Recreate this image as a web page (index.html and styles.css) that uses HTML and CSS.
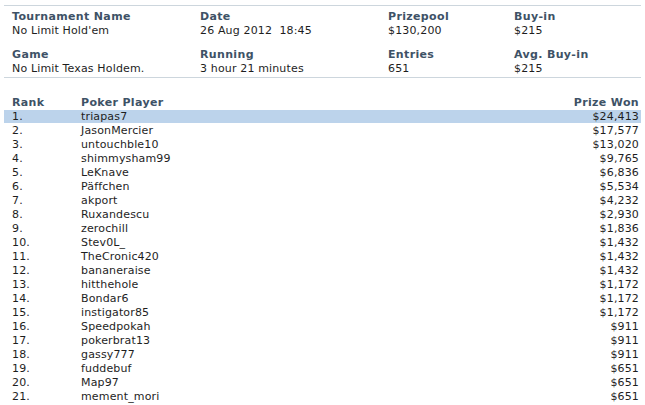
FILE: index.html
```html
<!DOCTYPE html>
<html>
<head>
<meta charset="utf-8">
<link rel="stylesheet" href="styles.css">
</head>
<body>
<div class="page">
  <div class="info">
    <div class="item"><div class="lbl">Tournament Name</div><div class="val">No Limit Hold'em</div></div>
    <div class="item"><div class="lbl">Date</div><div class="val">26 Aug 2012&nbsp;&nbsp;18:45</div></div>
    <div class="item"><div class="lbl">Prizepool</div><div class="val">$130,200</div></div>
    <div class="item"><div class="lbl">Buy-in</div><div class="val">$215</div></div>
    <div class="item"><div class="lbl">Game</div><div class="val">No Limit Texas Holdem.</div></div>
    <div class="item"><div class="lbl">Running</div><div class="val">3 hour 21 minutes</div></div>
    <div class="item"><div class="lbl">Entries</div><div class="val">651</div></div>
    <div class="item"><div class="lbl">Avg. Buy-in</div><div class="val">$215</div></div>
  </div>
  <table class="results">
    <thead>
      <tr><th class="rank">Rank</th><th class="player">Poker Player</th><th class="prize">Prize Won</th></tr>
    </thead>
    <tbody>
      <tr class="hl"><td class="rank">1.</td><td class="player">triapas7</td><td class="prize">$24,413</td></tr>
      <tr><td class="rank">2.</td><td class="player">JasonMercier</td><td class="prize">$17,577</td></tr>
      <tr><td class="rank">3.</td><td class="player">untouchble10</td><td class="prize">$13,020</td></tr>
      <tr><td class="rank">4.</td><td class="player">shimmysham99</td><td class="prize">$9,765</td></tr>
      <tr><td class="rank">5.</td><td class="player">LeKnave</td><td class="prize">$6,836</td></tr>
      <tr><td class="rank">6.</td><td class="player">Päffchen</td><td class="prize">$5,534</td></tr>
      <tr><td class="rank">7.</td><td class="player">akport</td><td class="prize">$4,232</td></tr>
      <tr><td class="rank">8.</td><td class="player">Ruxandescu</td><td class="prize">$2,930</td></tr>
      <tr><td class="rank">9.</td><td class="player">zerochill</td><td class="prize">$1,836</td></tr>
      <tr><td class="rank">10.</td><td class="player">Stev0L_</td><td class="prize">$1,432</td></tr>
      <tr><td class="rank">11.</td><td class="player">TheCronic420</td><td class="prize">$1,432</td></tr>
      <tr><td class="rank">12.</td><td class="player">bananeraise</td><td class="prize">$1,432</td></tr>
      <tr><td class="rank">13.</td><td class="player">hitthehole</td><td class="prize">$1,172</td></tr>
      <tr><td class="rank">14.</td><td class="player">Bondar6</td><td class="prize">$1,172</td></tr>
      <tr><td class="rank">15.</td><td class="player">instigator85</td><td class="prize">$1,172</td></tr>
      <tr><td class="rank">16.</td><td class="player">Speedpokah</td><td class="prize">$911</td></tr>
      <tr><td class="rank">17.</td><td class="player">pokerbrat13</td><td class="prize">$911</td></tr>
      <tr><td class="rank">18.</td><td class="player">gassy777</td><td class="prize">$911</td></tr>
      <tr><td class="rank">19.</td><td class="player">fuddebuf</td><td class="prize">$651</td></tr>
      <tr><td class="rank">20.</td><td class="player">Map97</td><td class="prize">$651</td></tr>
      <tr><td class="rank">21.</td><td class="player">mement_mori</td><td class="prize">$651</td></tr>
    </tbody>
  </table>
</div>
</body>
</html>
```
FILE: styles.css
```css
html, body {
  margin: 0;
  padding: 0;
  background: #ffffff;
}
body {
  font-family: "DejaVu Sans", Verdana, sans-serif;
  font-size: 11px;
  letter-spacing: 0.15px;
  color: #1e1e1e;
}
.page {
  padding: 5px 4px 0 4px;
}
.info {
  display: grid;
  grid-template-columns: 188px 188px 126px 1fr;
  row-gap: 10px;
  border-top: 1px solid #cdd6dd;
  border-bottom: 1px solid #cdd6dd;
  padding: 4px 0 1px 8px;
}
.lbl {
  font-weight: bold;
  letter-spacing: 0.35px;
  color: #3e5266;
  line-height: 14px;
}
.val {
  line-height: 14px;
}
.results {
  width: 100%;
  margin-top: 17px;
  border-collapse: separate;
  border-spacing: 0 1px;
}
.results th, .results td {
  padding: 0;
  height: 13px;
  line-height: 13px;
  white-space: nowrap;
}
.results th {
  font-weight: bold;
  letter-spacing: 0.35px;
  color: #3e5266;
  text-align: left;
}
.results .rank {
  width: 69px;
  padding-left: 8px;
}
.results .prize {
  text-align: right;
  padding-right: 2px;
}
.results tr.hl td {
  background: #bcd3eb;
}
```
